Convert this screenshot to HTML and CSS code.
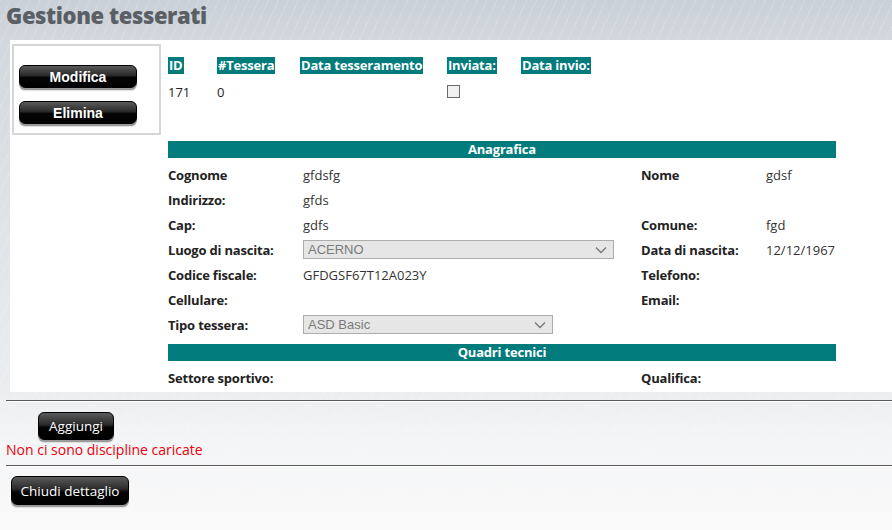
FILE: index.html
```html
<!DOCTYPE html>
<html lang="it">
<head>
<meta charset="utf-8">
<title>Gestione tesserati</title>
<link rel="stylesheet" href="styles.css">
</head>
<body>
<h1 class="page-title">Gestione tesserati</h1>
<div class="panel">
  <div class="actions">
    <button class="btn-black btn-bold">Modifica</button>
    <button class="btn-black btn-bold">Elimina</button>
  </div>
  <div class="content">
    <div class="summary">
      <div class="cell"><span class="th">ID</span></div>
      <div class="cell"><span class="th">#Tessera</span></div>
      <div class="cell"><span class="th">Data tesseramento</span></div>
      <div class="cell"><span class="th">Inviata:</span></div>
      <div class="cell"><span class="th">Data invio:</span></div>
      <div class="cell val">171</div>
      <div class="cell val">0</div>
      <div class="cell val"></div>
      <div class="cell val"><span class="checkbox"></span></div>
      <div class="cell val"></div>
    </div>

    <div class="section-bar bar-first">Anagrafica</div>
    <div class="details">
      <div class="lbl">Cognome</div><div class="v">gfdsfg</div><div class="lbl">Nome</div><div class="v">gdsf</div>
      <div class="lbl">Indirizzo:</div><div class="v">gfds</div><div class="lbl"></div><div class="v"></div>
      <div class="lbl">Cap:</div><div class="v">gdfs</div><div class="lbl">Comune:</div><div class="v">fgd</div>
      <div class="lbl">Luogo di nascita:</div>
      <div class="v"><div class="select sel-wide"><span>ACERNO</span><svg width="12" height="8" viewBox="0 0 12 8"><path d="M1 1.5 L6 6.5 L11 1.5" fill="none" stroke="#777" stroke-width="1.3"/></svg></div></div>
      <div class="lbl">Data di nascita:</div><div class="v">12/12/1967</div>
      <div class="lbl">Codice fiscale:</div><div class="v">GFDGSF67T12A023Y</div><div class="lbl">Telefono:</div><div class="v"></div>
      <div class="lbl">Cellulare:</div><div class="v"></div><div class="lbl">Email:</div><div class="v"></div>
      <div class="lbl">Tipo tessera:</div>
      <div class="v"><div class="select sel-narrow"><span>ASD Basic</span><svg width="12" height="8" viewBox="0 0 12 8"><path d="M1 1.5 L6 6.5 L11 1.5" fill="none" stroke="#777" stroke-width="1.3"/></svg></div></div>
      <div class="lbl"></div><div class="v"></div>
    </div>
    <div class="section-bar bar-second">Quadri tecnici</div>
    <div class="details">
      <div class="lbl">Settore sportivo:</div><div class="v"></div><div class="lbl">Qualifica:</div><div class="v"></div>
    </div>
  </div>
</div>
<hr class="sep sep-1">
<div class="add-row"><button class="btn-black btn-normal btn-add">Aggiungi</button></div>
<div class="error">Non ci sono discipline caricate</div>
<hr class="sep sep-2">
<div class="close-row"><button class="btn-black btn-normal btn-close">Chiudi dettaglio</button></div>
</body>
</html>
```
FILE: styles.css
```css
html, body {
  margin: 0;
  padding: 0;
}
body {
  width: 892px;
  height: 530px;
  overflow: hidden;
  font-family: "Segoe UI", "Open Sans", "Noto Sans", sans-serif;
  font-size: 13px;
  color: #222;
  background:
    repeating-linear-gradient(115deg, rgba(255,255,255,0.16) 0 1px, rgba(255,255,255,0) 1px 9px),
    linear-gradient(180deg, #c9d0d7 0px, #d3d8de 40px, #ebedef 390px, #f4f5f6 440px, #f9f9fa 530px);
}
.page-title {
  margin: 0;
  height: 40px;
  padding: 0 0 0 6px;
  box-sizing: border-box;
  font-size: 22px;
  line-height: 30px;
  font-weight: 800;
  color: #5a5f66;
  letter-spacing: -0.4px;
}
.panel {
  margin-left: 10px;
  height: 352px;
  background: #fff;
  display: flex;
  align-items: flex-start;
}
.actions {
  margin: 4px 0 0 2px;
  width: 149px;
  height: 91px;
  box-sizing: border-box;
  border: 2px solid #d6d6d6;
  display: flex;
  flex-direction: column;
  gap: 13px;
  padding: 19px 0 0 5px;
}
.btn-black {
  display: block;
  margin: 0;
  padding: 0;
  color: #fff;
  border: 1px solid #000;
  border-radius: 6px;
  background: linear-gradient(180deg, #5a5a5a 0%, #2a2a2a 45%, #050505 55%, #000 100%);
  box-shadow: 0 2px 0 #9a9a9a, 0 3px 1px #ddd;
  cursor: pointer;
}
.btn-bold {
  width: 118px;
  height: 23px;
  font-family: "Liberation Sans", Arial, sans-serif;
  font-weight: 700;
  font-size: 14px;
  line-height: 20px;
}
.btn-normal {
  font-family: "Segoe UI", "Open Sans", "Noto Sans", sans-serif;
  font-size: 13.5px;
  font-weight: 400;
  height: 28px;
  line-height: 24px;
}
.content {
  margin-left: 7px;
  width: 668px;
}
.summary {
  display: grid;
  grid-template-columns: 49px 83px 147px 74px 1fr;
  grid-template-rows: 17px 27px;
  margin-top: 17px;
}
.cell {
  display: flex;
  align-items: center;
}
.th {
  display: inline-block;
  background: #017b7b;
  color: #fff;
  font-weight: 700;
  height: 17px;
  line-height: 16px;
  padding: 0 1px;
  white-space: nowrap;
  letter-spacing: -0.2px;
}
.val {
  align-items: center;
  padding-top: 8px;
}
.checkbox {
  display: inline-block;
  width: 11px;
  height: 11px;
  border: 1px solid #6a6a6a;
  background: #f0f0f0;
}
.section-bar {
  background: #017b7b;
  color: #fff;
  font-weight: 700;
  text-align: center;
  height: 17px;
  line-height: 16px;
  letter-spacing: -0.2px;
}
.bar-first { margin-top: 40px; margin-bottom: 4px; }
.bar-second { margin-top: 7px; margin-bottom: 4px; }
.details {
  display: grid;
  grid-template-columns: 135px 338px 125px 70px;
  grid-auto-rows: 25px;
}
.lbl, .v {
  display: flex;
  align-items: center;
  white-space: nowrap;
}
.lbl {
  font-weight: 700;
  color: #222;
  letter-spacing: -0.2px;
}
.v { color: #333; }
.select {
  box-sizing: border-box;
  height: 19px;
  border: 1px solid #adadad;
  background: #e6e6e6;
  display: flex;
  align-items: center;
  justify-content: space-between;
  padding: 0 6px 0 4px;
  font-family: "Liberation Sans", Arial, sans-serif;
  font-size: 13px;
  color: #7a7a7a;
}
.sel-wide { width: 311px; }
.sel-narrow { width: 250px; }
.sep {
  margin: 0 0 0 6px;
  border: 0;
  height: 1px;
  background: #5a5a5a;
  box-shadow: 0 1px 0 #fff;
}
.sep-1 { margin-top: 8px; }
.add-row {
  padding: 11px 0 0 38px;
}
.btn-add { width: 76px; }
.error {
  color: #e8000b;
  font-size: 14px;
  line-height: 18px;
  padding-left: 6px;
  margin-top: 1px;
}
.sep-2 { margin-top: 6px; }
.close-row {
  padding: 10px 0 0 11px;
}
.btn-close { width: 118px; height: 29px; }
```
